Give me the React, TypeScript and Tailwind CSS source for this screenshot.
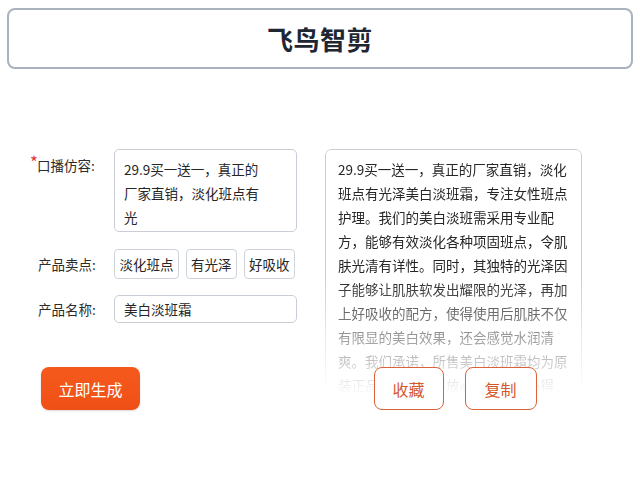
import React from "react";

const resultLines = [
  "29.9买一送一，真正的厂家直销，淡化",
  "班点有光泽美白淡班霜，专注女性班点",
  "护理。我们的美白淡班需采用专业配",
  "方，能够有效淡化各种项固班点，令肌",
  "肤光清有详性。同时，其独特的光泽因",
  "子能够让肌肤软发出耀限的光泽，再加",
  "上好吸收的配方，使得使用后肌肤不仅",
  "有限显的美白效果，还会感觉水润清",
  "爽。我们承诺，所售美白淡班霜均为原",
  "装正品，让您买得放心，用得安心得",
];

const tags = ["淡化班点", "有光泽", "好吸收"];

const App = () => {
  return (
    <div className="w-[640px] h-[481px] bg-white text-[#2b2b2b] font-['Noto_Sans_CJK_SC',sans-serif] overflow-hidden">
      {/* Header */}
      <div className="mx-[7px] mt-[8px] h-[61px] rounded-[8px] border-2 border-[#aab2be] flex items-center justify-center">
        <h1 className="text-[26px] font-bold text-[#1e2633] tracking-[0.5px]">飞鸟智剪</h1>
      </div>

      <div className="flex mt-[80px] pl-[31px] gap-[28px]">
        {/* Form */}
        <div className="w-[266px] flex flex-col">
          <div className="flex">
            <div className="w-[83px] shrink-0 flex pt-[4px]">
              <span className="text-[#e53935] text-[17px] leading-none w-[7px] -ml-[1px]">*</span>
              <span className="text-[13.5px] leading-[24px]">口播仿容:</span>
            </div>
            <div className="w-[183px] h-[83px] rounded-[5px] border border-[#c9ced6] pl-[9px] pt-[7px] text-[13.5px] leading-[24px] text-[#262626]">
              <div>29.9买一送一，真正的</div>
              <div>厂家直销，淡化班点有</div>
              <div>光</div>
            </div>
          </div>

          <div className="flex items-center mt-[17px]">
            <div className="w-[83px] shrink-0 pl-[7px] text-[13.5px]">产品卖点:</div>
            <div className="flex gap-[6.5px]">
              {tags.map((t) => (
                <span
                  key={t}
                  className="h-[30px] px-[4.5px] shrink-0 whitespace-nowrap flex items-center rounded-[4px] border border-[#cfd4db] text-[13.5px] text-[#262626]"
                >
                  {t}
                </span>
              ))}
            </div>
          </div>

          <div className="flex items-center mt-[16px]">
            <div className="w-[83px] shrink-0 pl-[7px] text-[13.5px]">产品名称:</div>
            <div className="w-[183px] h-[28px] rounded-[5px] border border-[#c9ced6] pl-[9px] flex items-center text-[13.5px] text-[#262626]">
              美白淡班霜
            </div>
          </div>

          <button className="mt-[44px] ml-[10px] w-[99px] h-[43px] rounded-[8px] bg-gradient-to-b from-[#f55a1c] to-[#ef4f16] text-white text-[16px] shadow-[0_1px_2px_rgba(0,0,0,0.15)]">
            立即生成
          </button>
        </div>

        {/* Result */}
        <div className="w-[257px] flex flex-col">
          <div className="h-[246px] rounded-[6px] border border-[#c9ced6] pl-[12px] pt-[7px] overflow-hidden [mask-image:linear-gradient(to_bottom,#000_52%,rgba(0,0,0,0.35)_82%,transparent_100%)]">
            {resultLines.map((line, i) => (
              <div key={i} className="whitespace-nowrap text-[13.5px] leading-[24px] text-[#262626]">
                {line}
              </div>
            ))}
          </div>
          <div className="relative -mt-[28px] flex justify-center gap-[21px] pl-[3px]">
            <button className="w-[70px] h-[43px] rounded-[8px] border-[1.5px] border-[#dc6237] bg-white text-[#d4582a] text-[16px]">
              收藏
            </button>
            <button className="w-[72px] h-[43px] rounded-[8px] border-[1.5px] border-[#dc6237] bg-white text-[#d4582a] text-[16px]">
              复制
            </button>
          </div>
        </div>
      </div>
    </div>
  );
};

export default App;
